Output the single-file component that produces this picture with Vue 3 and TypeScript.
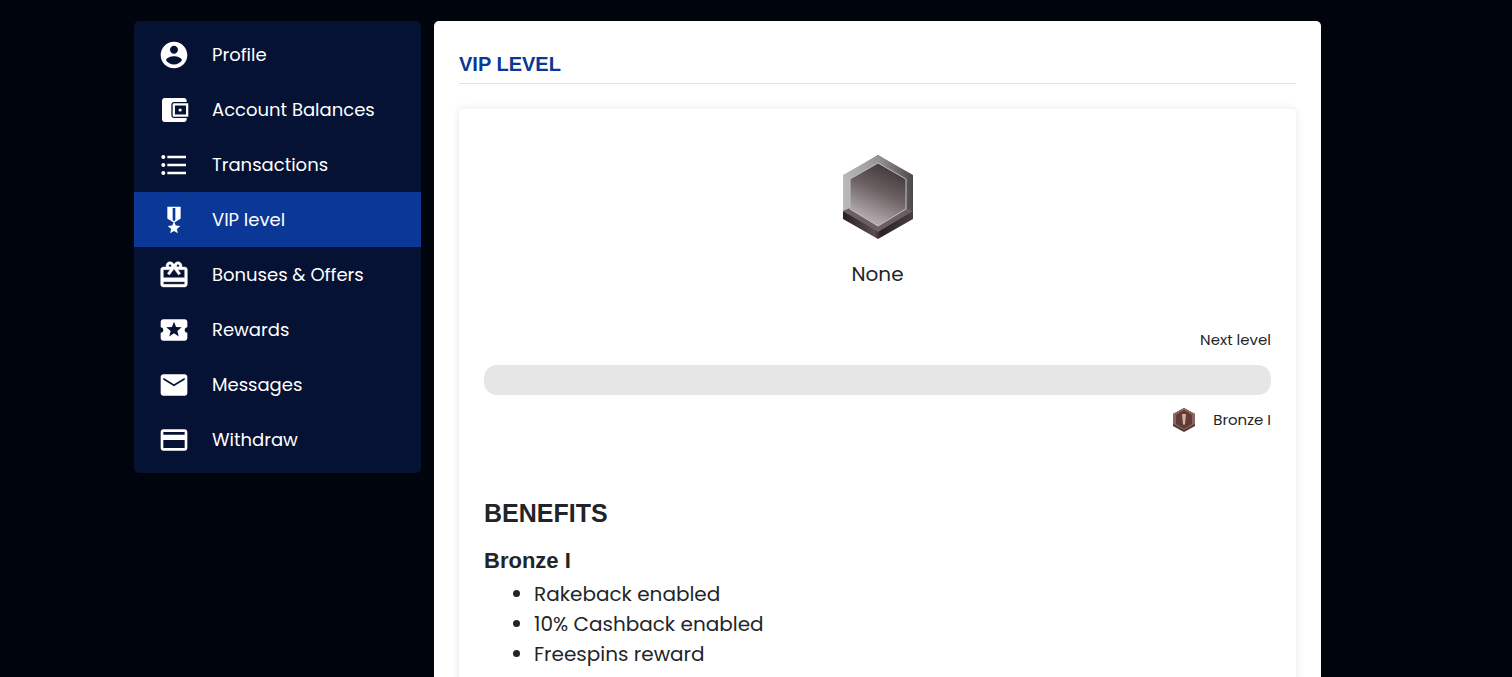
<script setup lang="ts">
interface NavItem {
  label: string
  path: string
  active?: boolean
  bold?: boolean
}

const items: NavItem[] = [
  { label: 'Profile', path: 'M12 2C6.48 2 2 6.48 2 12s4.48 10 10 10 10-4.48 10-10S17.52 2 12 2zm0 3c1.66 0 3 1.34 3 3s-1.34 3-3 3-3-1.34-3-3 1.34-3 3-3zm0 14.2c-2.5 0-4.71-1.28-6-3.22.03-1.99 4-3.08 6-3.08 1.99 0 5.97 1.09 6 3.08-1.29 1.94-3.5 3.22-6 3.22z' },
  { label: 'Account Balances', path: 'M21.500 6V5c0-1.100-.9-2-2-2H5c-1.100 0-2 .9-2 2v14c0 1.100.9 2 2 2h14.500c1.100 0 2-.9 2-2v-1H12c-1.100 0-2-.9-2-2V8c0-1.100.9-2 2-2h9.500zM12 6.900c-.55 0-1 .45-1 1v8.200c0 .55.45 1 1 1h10.700V6.900H12zm9 8.500h-8.300V8.600H21v6.800zM16.600 10.800a1.200 1.200 0 1 1 0 2.400 1.200 1.200 0 0 1 0-2.400z' },
  { label: 'Transactions', path: 'M4 10.500c-.83 0-1.500.67-1.500 1.500s.67 1.500 1.500 1.500 1.500-.67 1.500-1.500-.67-1.500-1.500-1.500zm0-6c-.83 0-1.500.67-1.500 1.500S3.170 7.500 4 7.500 5.500 6.830 5.500 6 4.830 4.500 4 4.500zm0 12c-.83 0-1.500.68-1.500 1.500s.68 1.500 1.500 1.500 1.500-.68 1.500-1.500-.67-1.500-1.500-1.500zM7 19h14v-2H7v2zm0-6h14v-2H7v2zm0-8v2h14V5H7z' },
  { label: 'VIP level', active: true, path: 'M17 10.430V2H7v8.430c0 .35.18.68.49.86l4.180 2.510-.99 2.340-3.410.29 2.590 2.240L9.070 22 12 20.230 14.930 22l-.78-3.330 2.590-2.240-3.410-.29-.99-2.340 4.180-2.510c.3-.18.48-.5.48-.86zm-4 1.800-1 .6-1-.6V3h2v9.230z' },
  { label: 'Bonuses & Offers', bold: true, path: 'M20 6h-2.180c.11-.31.18-.65.18-1 0-1.660-1.340-3-3-3-1.050 0-1.960.54-2.500 1.350l-.5.67-.5-.68C10.960 2.540 10.050 2 9 2 7.340 2 6 3.340 6 5c0 .35.07.69.18 1H4c-1.110 0-1.990.89-1.990 2L2 19c0 1.110.89 2 2 2h16c1.110 0 2-.89 2-2V8c0-1.110-.89-2-2-2zm-5-2c.55 0 1 .45 1 1s-.45 1-1 1-1-.45-1-1 .45-1 1-1zM9 4c.55 0 1 .45 1 1s-.45 1-1 1-1-.45-1-1 .45-1 1-1zm11 15H4v-2h16v2zm0-5H4V8h5.080L7 10.830 8.620 12 11 8.760l1-1.360 1 1.360L15.380 12 17 10.830 14.920 8H20v6z' },
  { label: 'Rewards', path: 'M20 12c0-1.100.9-2 2-2V6c0-1.100-.9-2-2-2H4c-1.100 0-1.990.9-1.990 2v4c1.100 0 1.990.9 1.990 2s-.89 2-2 2v4c0 1.100.9 2 2 2h16c1.100 0 2-.9 2-2v-4c-1.100 0-2-.9-2-2zm-4.420 4.800L12 14.500l-3.580 2.300 1.080-4.120-3.290-2.690 4.240-.25L12 5.800l1.540 3.950 4.240.25-3.290 2.690 1.090 4.110z' },
  { label: 'Messages', path: 'M20 4H4c-1.100 0-1.990.9-1.990 2L2 18c0 1.100.9 2 2 2h16c1.100 0 2-.9 2-2V6c0-1.100-.9-2-2-2zm0 4-8 5-8-5V6.500l8 5 8-5V8z' },
  { label: 'Withdraw', path: 'M20 4H4c-1.110 0-1.990.89-1.990 2L2 18c0 1.110.89 2 2 2h16c1.110 0 2-.89 2-2V6c0-1.110-.89-2-2-2zm0 14H4v-6h16v6zm0-10H4V6h16v2z' },
]

const benefits: string[] = ['Rakeback enabled', '10% Cashback enabled', 'Freespins reward']
</script>

<template>
  <div class="page">
    <nav class="sidebar" aria-label="Account">
      <a
        v-for="item in items"
        :key="item.label"
        href="#"
        class="nav-item"
        :class="{ active: item.active }"
        :aria-current="item.active ? 'page' : undefined"
      >
        <svg class="nav-icon" :class="{ bold: item.bold }" viewBox="0 0 24 24" aria-hidden="true"><path :d="item.path" fill-rule="evenodd" /></svg>
        <span>{{ item.label }}</span>
      </a>
    </nav>
    <main class="content">
      <h1 class="title">VIP LEVEL</h1>
      <section class="card">
        <div class="current">
          <svg class="badge" viewBox="0 0 70 84" aria-hidden="true">
            <defs>
              <linearGradient id="rim" x1="0" y1="0" x2="1" y2="0">
                <stop offset="0" stop-color="#b9babf" />
                <stop offset="0.5" stop-color="#989495" />
                <stop offset="1" stop-color="#4d484b" />
              </linearGradient>
              <linearGradient id="base" x1="0" y1="0" x2="1" y2="0">
                <stop offset="0" stop-color="#292024" />
                <stop offset="0.45" stop-color="#5b4d50" />
                <stop offset="0.55" stop-color="#2b2023" />
                <stop offset="1" stop-color="#4a4043" />
              </linearGradient>
              <linearGradient id="face" x1="0.7" y1="0" x2="0.3" y2="1">
                <stop offset="0" stop-color="#3d3436" />
                <stop offset="0.45" stop-color="#6c6264" />
                <stop offset="1" stop-color="#c2babd" />
              </linearGradient>
            </defs>
            <path fill="url(#base)" d="M0 22 35 0l35 22v42L35 84 0 64z" />
            <path fill="url(#rim)" d="M0 20 35 0l35 20v36L35 75 0 56z" />
            <path fill="#6b5f62" d="m0 56 7-3 28 17 28-17 7 3-35 21z" />
            <path fill="url(#face)" stroke="#c5bfc1" d="M7 24 35 8l28 16v30L35 71 7 54z" />
          </svg>
          <p class="level">None</p>
        </div>
        <div class="next">
          <p id="next-label" class="next-label small">Next level</p>
          <div class="bar" role="progressbar" aria-labelledby="next-label" aria-valuenow="0" aria-valuemin="0" aria-valuemax="100"></div>
          <div class="target small">
            <svg class="mini" viewBox="0 0 22 24" aria-hidden="true">
              <path fill="#4b3431" d="M0 6 11 0l11 6v12l-11 6-11-6z" />
              <path fill="#8d6459" d="M0 6 11 0l11 6v10l-11 6-11-6z" />
              <path fill="#5f3c36" d="m3 7 8-5 8 5v9l-8 5-8-5z" />
              <path fill="#d5b09d" d="M9 6h4l-1 10-1 1-1-1z" />
            </svg>
            <span>Bronze I</span>
          </div>
        </div>
        <h2 class="benefits-title">BENEFITS</h2>
        <h3 class="tier">Bronze I</h3>
        <ul class="benefits">
          <li v-for="benefit in benefits" :key="benefit">{{ benefit }}</li>
        </ul>
      </section>
    </main>
  </div>
</template>

<style>
html {
  background: #00040d;
}
body {
  margin: 0;
  height: 100vh;
  overflow: hidden;
}
</style>

<style scoped>
.page {
  display: flex;
  align-items: flex-start;
  gap: 13px;
  padding: 21px 191px 0 134px;
  font-family: Poppins, Inter, sans-serif;
  color: #212529;
}
.sidebar {
  flex: 0 0 287px;
  padding: 6px 0;
  border-radius: 5px;
  background: #061233;
}
.nav-item {
  display: flex;
  align-items: center;
  gap: 22px;
  height: 55px;
  padding-left: 24px;
  color: #fff;
  font-size: 18px;
  text-decoration: none;
}
.nav-item.active {
  background: #0b3796;
}
.nav-icon {
  width: 32px;
  height: 32px;
  fill: #fff;
}
.nav-icon.bold {
  stroke: #fff;
  stroke-width: 0.3;
}
.content {
  flex: 1;
  padding: 25px;
  border-radius: 5px;
  background: #fff;
}
h1,
h2,
h3 {
  margin: 0;
  font-family: "Liberation Sans", Arial, sans-serif;
  font-weight: 700;
}
.title {
  padding: 5px 0 6px;
  border-bottom: 1px solid #dee2e6;
  color: #0b3796;
  font-size: 20px;
  line-height: 26px;
}
.card {
  margin-top: 25px;
  padding: 46px 25px 25px;
  border-radius: 4px;
  box-shadow: 0 0 8px rgba(0, 0, 0, 0.1);
}
.current {
  display: flex;
  flex-direction: column;
  align-items: center;
}
.badge {
  width: 70px;
  height: 84px;
}
.level {
  margin: 20px 0 0;
  font-size: 20px;
  line-height: 30px;
}
.next {
  margin-top: 39px;
}
.small {
  font-size: 15px;
  line-height: 24px;
}
.next-label {
  margin: 0;
  text-align: right;
}
.bar {
  height: 30px;
  margin-top: 13px;
  border-radius: 13px;
  background: #e6e6e6;
}
.target {
  display: flex;
  justify-content: flex-end;
  align-items: center;
  gap: 18px;
  margin-top: 13px;
}
.mini {
  width: 22px;
  height: 24px;
}
.benefits-title {
  margin-top: 66px;
  font-size: 25px;
  line-height: 30px;
}
.tier {
  margin-top: 20px;
  font-size: 22px;
  line-height: 26px;
}
.benefits {
  margin: 5px 0 0;
  padding-left: 50px;
  font-size: 20px;
  line-height: 30px;
}
</style>
